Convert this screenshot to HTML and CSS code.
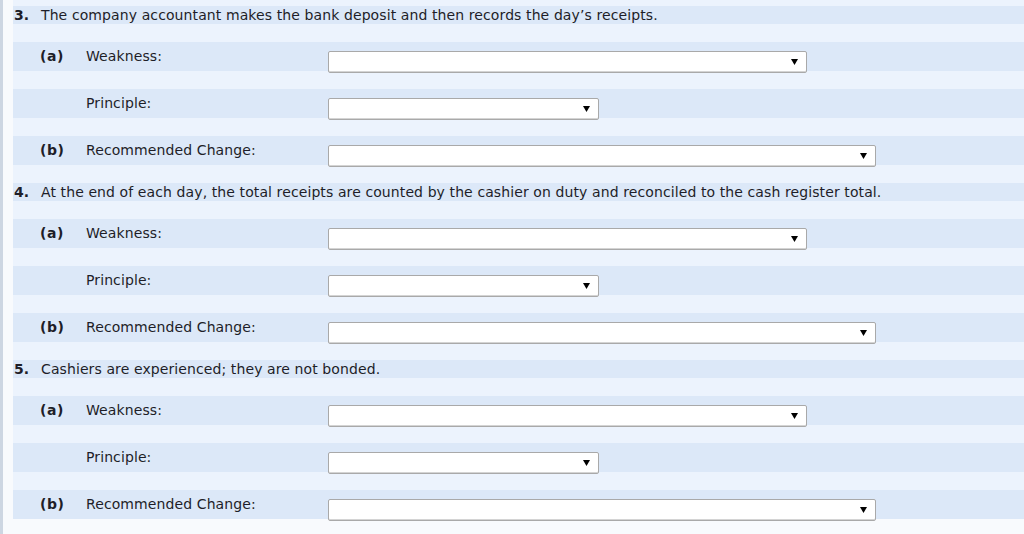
FILE: index.html
```html
<!DOCTYPE html>
<html>
<head>
<meta charset="utf-8">
<link rel="stylesheet" href="styles.css">
</head>
<body>
<div class="page">
  <div class="sheet">
    <div class="qrow"><span class="qnum">3.</span><span class="qtext">The company accountant makes the bank deposit and then records the day’s receipts.</span></div>
    <div class="arow"><span class="part">(a)</span><span class="label">Weakness:</span><span class="sel w-weak"><select></select><svg class="caret" width="7" height="6" viewBox="0 0 7 6"><path d="M0 0H7L3.5 6Z"/></svg></span></div>
    <div class="arow"><span class="part"></span><span class="label">Principle:</span><span class="sel w-prin"><select></select><svg class="caret" width="7" height="6" viewBox="0 0 7 6"><path d="M0 0H7L3.5 6Z"/></svg></span></div>
    <div class="arow"><span class="part">(b)</span><span class="label">Recommended Change:</span><span class="sel w-rec"><select></select><svg class="caret" width="7" height="6" viewBox="0 0 7 6"><path d="M0 0H7L3.5 6Z"/></svg></span></div>

    <div class="qrow"><span class="qnum">4.</span><span class="qtext">At the end of each day, the total receipts are counted by the cashier on duty and reconciled to the cash register total.</span></div>
    <div class="arow"><span class="part">(a)</span><span class="label">Weakness:</span><span class="sel w-weak"><select></select><svg class="caret" width="7" height="6" viewBox="0 0 7 6"><path d="M0 0H7L3.5 6Z"/></svg></span></div>
    <div class="arow"><span class="part"></span><span class="label">Principle:</span><span class="sel w-prin"><select></select><svg class="caret" width="7" height="6" viewBox="0 0 7 6"><path d="M0 0H7L3.5 6Z"/></svg></span></div>
    <div class="arow"><span class="part">(b)</span><span class="label">Recommended Change:</span><span class="sel w-rec"><select></select><svg class="caret" width="7" height="6" viewBox="0 0 7 6"><path d="M0 0H7L3.5 6Z"/></svg></span></div>

    <div class="qrow"><span class="qnum">5.</span><span class="qtext">Cashiers are experienced; they are not bonded.</span></div>
    <div class="arow"><span class="part">(a)</span><span class="label">Weakness:</span><span class="sel w-weak"><select></select><svg class="caret" width="7" height="6" viewBox="0 0 7 6"><path d="M0 0H7L3.5 6Z"/></svg></span></div>
    <div class="arow"><span class="part"></span><span class="label">Principle:</span><span class="sel w-prin"><select></select><svg class="caret" width="7" height="6" viewBox="0 0 7 6"><path d="M0 0H7L3.5 6Z"/></svg></span></div>
    <div class="arow"><span class="part">(b)</span><span class="label">Recommended Change:</span><span class="sel w-rec"><select></select><svg class="caret" width="7" height="6" viewBox="0 0 7 6"><path d="M0 0H7L3.5 6Z"/></svg></span></div>
  </div>
</div>
</body>
</html>
```

FILE: styles.css
```css
html, body {
  margin: 0;
  padding: 0;
  background: #ffffff;
}
body {
  font-family: "DejaVu Sans", Verdana, sans-serif;
  font-size: 14px;
  letter-spacing: 0.1px;
  color: #1e1e28;
}
.page {
  height: 534px;
  border-left: 3px solid #cdd6e2;
  padding-left: 10px;
  background: #f8fafd;
  box-sizing: border-box;
}
.sheet {
  background: #ecf3fd;
  padding-top: 6px;
  display: flex;
  flex-direction: column;
  gap: 18px;
}
.qrow {
  height: 18px;
  line-height: 18px;
  background: #dce8f8;
  display: flex;
  white-space: nowrap;
}
.qnum {
  width: 27px;
  padding-left: 1px;
  font-weight: bold;
}
.arow {
  height: 29px;
  background: #dce8f8;
  display: flex;
  align-items: flex-start;
  white-space: nowrap;
}
.part {
  width: 46px;
  padding-left: 27px;
  line-height: 28px;
  font-weight: bold;
  letter-spacing: 0.6px;
}
.label {
  width: 242px;
  line-height: 28px;
}
.sel {
  position: relative;
  margin-top: 9px;
  height: 22px;
  display: block;
}
.sel select {
  appearance: none;
  -webkit-appearance: none;
  display: block;
  width: 100%;
  height: 22px;
  margin: 0;
  background: #ffffff;
  border: 1px solid #a9a9a9;
  border-radius: 2px;
  box-shadow: inset 0 -1px 0 #d4d4d4;
  box-sizing: border-box;
}
.caret {
  position: absolute;
  right: 9px;
  top: 8px;
  fill: #000000;
}
.w-weak { width: 479px; }
.w-prin { width: 271px; }
.w-rec { width: 548px; }
```
